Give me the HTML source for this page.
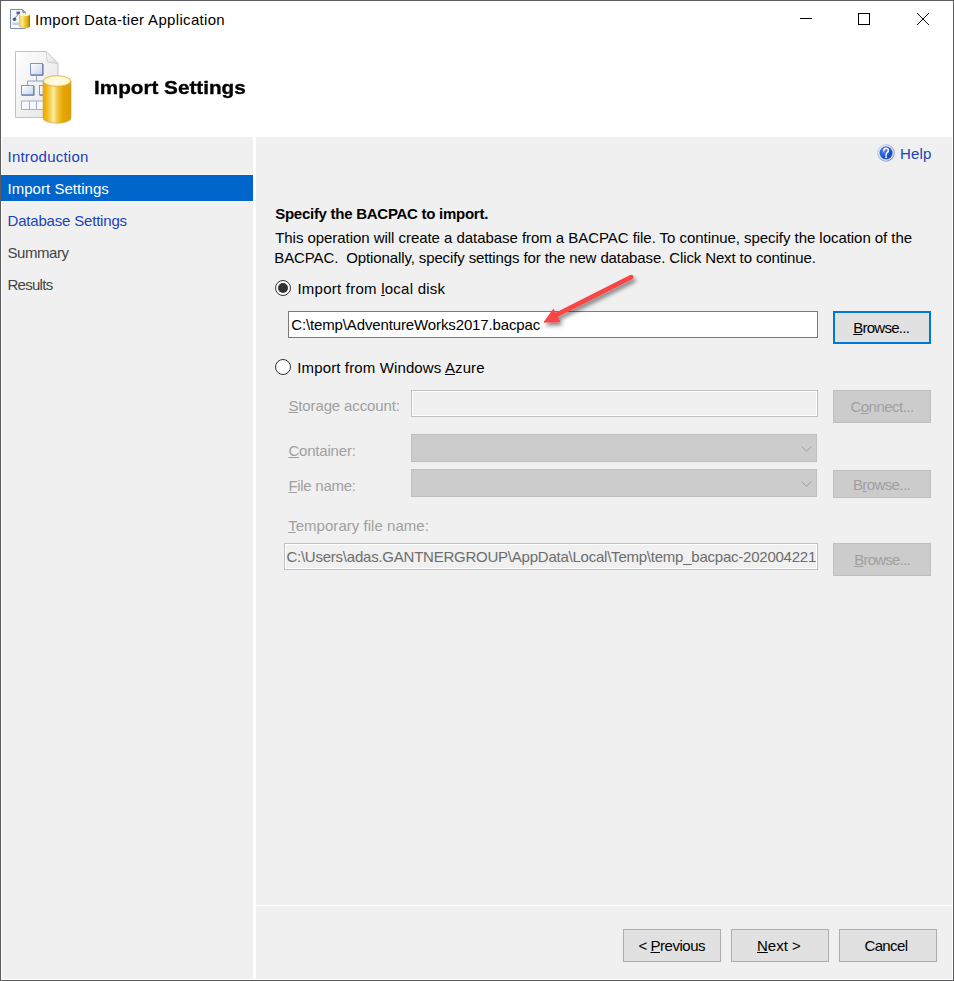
<!DOCTYPE html>
<html><head><meta charset="utf-8">
<style>
*{margin:0;padding:0;box-sizing:border-box}
html,body{width:954px;height:981px;overflow:hidden;background:#fff}
body{position:relative;font-family:"Liberation Sans",sans-serif;font-size:15px;color:#000}
.a{position:absolute}
.t{position:absolute;white-space:nowrap;line-height:15px;height:15px;font-size:15.0px}
.u{text-decoration:underline;text-underline-offset:1px}
.btn{position:absolute;background:#e1e1e1;border:1px solid #adadad}
.dis{position:absolute;background:#cccccc;border:1px solid #bfbfbf}
.gray{color:#a0a0a0}
</style></head><body>
<!-- window frame -->
<div class="a" style="left:0;top:0;width:954px;height:981px;border:1px solid #5d5d61"></div>

<!-- small title icon -->
<svg class="a" style="left:0;top:0" width="34" height="34" viewBox="0 0 34 34">
  <defs>
    <linearGradient id="scyl" x1="0" y1="0" x2="1" y2="0">
      <stop offset="0" stop-color="#f0c430"/>
      <stop offset="0.3" stop-color="#f8eaa0"/>
      <stop offset="0.5" stop-color="#f2cc40"/>
      <stop offset="0.8" stop-color="#e4a808"/>
      <stop offset="1" stop-color="#9a7010"/>
    </linearGradient>
  </defs>
  <path d="M10.5 9.5 H22.5 L25.5 12.5 V28.5 H10.5 Z" fill="#f6f8fc" stroke="#7a8cb2" stroke-width="1"/>
  <path d="M22 9.5 L22.5 13 L25.5 13 Z" fill="#7a8cb2"/>
  <rect x="16.5" y="11.5" width="3.5" height="3" fill="#56688e"/>
  <path d="M14.5 18 L18 15" stroke="#8090b8" stroke-width="1"/>
  <circle cx="14.5" cy="19.3" r="1.8" fill="#4c5c84"/>
  <rect x="12.5" y="22.5" width="7" height="2.5" fill="#c4cde0"/>
  <path d="M19 15 V27 Q24.5 29.4 30 27 V15 Z" fill="url(#scyl)"/>
  <ellipse cx="24.5" cy="14.8" rx="5.5" ry="1.4" fill="#faf2b8"/>
</svg>
<div class="t" style="left:35.00px;top:12.00px;letter-spacing:0.326px;color:#000">Import Data-tier Application</div>

<!-- window controls -->
<div class="a" style="left:800px;top:18px;width:12px;height:1px;background:#000"></div>
<div class="a" style="left:858px;top:13px;width:12px;height:12px;border:1px solid #000"></div>
<svg class="a" style="left:916px;top:12px" width="14" height="14" viewBox="0 0 14 14"><path d="M1 1 L13 13 M13 1 L1 13" stroke="#000" stroke-width="0.95"/></svg>

<!-- header icon -->
<svg class="a" style="left:0;top:40px" width="80" height="90" viewBox="0 40 80 90">
  <defs>
    <linearGradient id="pg" x1="0" y1="0" x2="1" y2="1">
      <stop offset="0" stop-color="#fefefe"/><stop offset="1" stop-color="#e4e4e4"/>
    </linearGradient>
    <linearGradient id="cyl" x1="0" y1="0" x2="1" y2="0">
      <stop offset="0" stop-color="#eba600"/>
      <stop offset="0.14" stop-color="#f2ba18"/>
      <stop offset="0.38" stop-color="#f8eca4"/>
      <stop offset="0.52" stop-color="#f0c63c"/>
      <stop offset="0.72" stop-color="#e6a600"/>
      <stop offset="1" stop-color="#dc9c00"/>
    </linearGradient>
    <radialGradient id="ctop" cx="0.5" cy="0.5" r="0.6">
      <stop offset="0" stop-color="#fffef4"/><stop offset="0.7" stop-color="#fdf6c8"/><stop offset="1" stop-color="#f2dc88"/>
    </radialGradient>
    <linearGradient id="box" x1="0" y1="0" x2="1" y2="1">
      <stop offset="0" stop-color="#ffffff"/><stop offset="1" stop-color="#c6d3ee"/>
    </linearGradient>
    <linearGradient id="fold" x1="0" y1="0" x2="1" y2="1">
      <stop offset="0" stop-color="#ffffff"/><stop offset="1" stop-color="#d8d8d8"/>
    </linearGradient>
  </defs>
  <path d="M15.5 51.5 H46 L58 63.5 V117.5 H15.5 Z" fill="url(#pg)" stroke="#c2c2c2" stroke-width="1"/>
  <path d="M46 51.5 L47.5 62 L58 63.5 Z" fill="url(#fold)" stroke="#c8c8c8" stroke-width="0.8" stroke-linejoin="round"/>
  <rect x="30.5" y="63.5" width="12" height="11.5" fill="url(#box)" stroke="#8497c0" stroke-width="1"/><path d="M31 75.2 H43 M43 64 V75.5" stroke="#6d80a8" stroke-width="1.2"/>
  <path d="M36.5 75 V81 M27.5 81 H45 M27.5 81 V85 M44.5 81 V85" stroke="#8ea2c8" stroke-width="1" fill="none"/>
  <rect x="21.5" y="85.5" width="12" height="9.5" fill="url(#box)" stroke="#8497c0" stroke-width="1"/><path d="M22 95.2 H34 M34 86 V95.5" stroke="#6d80a8" stroke-width="1.2"/>
  <rect x="39.5" y="85.5" width="12" height="9.5" fill="url(#box)" stroke="#8497c0" stroke-width="1"/><path d="M40 95.2 H50" stroke="#6d80a8" stroke-width="1.2"/>
  <path d="M21.5 101 H50 V109.5 H21.5 Z M29.5 101 V109.5 M36.5 101 V109.5 M43.5 101 V109.5" fill="#f6f8fc" stroke="#a2b0cc" stroke-width="1"/>
  <path d="M43 81 V118 A14 5.2 0 0 0 71 118 V81 Z" fill="url(#cyl)" stroke="#d8a850" stroke-width="0.7"/>
  <ellipse cx="57" cy="81" rx="13.8" ry="5.3" fill="url(#ctop)" stroke="#dcaa48" stroke-width="0.8"/>
</svg>
<div class="t" style="left:93.6px;top:79px;font-size:18.5px;line-height:18px;height:18px;font-weight:bold;transform:scaleX(1.118);transform-origin:0 0;-webkit-text-stroke:0.35px #000">Import Settings</div>

<!-- panels -->
<div class="a" style="left:1px;top:137px;width:952px;height:843px;background:#fff"></div>
<div class="a" style="left:2px;top:137px;width:251px;height:842px;background:#f0f0f0"></div>
<div class="a" style="left:256px;top:137px;width:696px;height:842px;background:#f0f0f0"></div>
<div class="a" style="left:256px;top:905px;width:696px;height:1px;background:#fff"></div>

<!-- nav -->
<div class="a" style="left:2px;top:174px;width:251px;height:28px;background:#fbf7f0"></div>
<div class="a" style="left:1px;top:175px;width:252px;height:26px;background:#0066cc"></div>
<div class="t" style="left:7.50px;top:149.00px;letter-spacing:0.221px;color:#1a42b8">Introduction</div>
<div class="t" style="left:7.50px;top:181.00px;letter-spacing:0.032px;color:#fff">Import Settings</div>
<div class="t" style="left:7.50px;top:213.00px;letter-spacing:-0.189px;color:#1a42b8">Database Settings</div>
<div class="t" style="left:7.40px;top:245.00px;letter-spacing:-0.422px;color:#444">Summary</div>
<div class="t" style="left:7.40px;top:277.00px;letter-spacing:-0.701px;color:#444">Results</div>

<!-- help -->
<svg class="a" style="left:876px;top:143px" width="20" height="20" viewBox="0 0 20 20">
  <defs><radialGradient id="hg" cx="0.35" cy="0.35" r="0.75"><stop offset="0" stop-color="#5a8cf0"/><stop offset="0.55" stop-color="#2458d8"/><stop offset="1" stop-color="#1440b0"/></radialGradient>
  <linearGradient id="hr" x1="0" y1="0" x2="1" y2="1"><stop offset="0" stop-color="#d4def2"/><stop offset="1" stop-color="#7a90c0"/></linearGradient></defs>
  <circle cx="10" cy="9.9" r="8.8" fill="url(#hr)"/>
  <circle cx="10" cy="9.9" r="7.3" fill="none" stroke="#eef3fb" stroke-width="0.9"/>
  <circle cx="10" cy="9.9" r="6.3" fill="url(#hg)"/>
  <path d="M7.7 7.6 Q7.9 5.3 10.2 5.3 Q12.5 5.4 12.4 7.4 Q12.3 8.8 10.9 9.8 Q10.1 10.5 10.1 12.2" fill="none" stroke="#fff" stroke-width="1.5" stroke-linecap="round"/>
  <circle cx="10.1" cy="14.2" r="1" fill="#fff"/>
</svg>
<div class="t" style="left:900.00px;top:146.00px;letter-spacing:0.183px;color:#1a42b8">Help</div>

<!-- content -->
<div class="t" style="left:275.21px;top:206.00px;letter-spacing:-0.266px;font-weight:bold">Specify the BACPAC to import.</div>
<div class="t" style="left:275.21px;top:230.00px;letter-spacing:-0.047px">This operation will create a database from a BACPAC file. To continue, specify the location of the</div>
<div class="t" style="left:274.30px;top:250.00px;letter-spacing:-0.120px">BACPAC.&nbsp; Optionally, specify settings for the new database. Click Next to continue.</div>

<!-- radio 1 -->
<div class="a" style="left:275px;top:280px;width:16px;height:16px;border-radius:50%;border:1px solid #333;background:#fff"></div>
<div class="a" style="left:278px;top:283px;width:10px;height:10px;border-radius:50%;background:#333"></div>
<div class="t" style="left:297.40px;top:281.00px;letter-spacing:0.246px">Import from <span class="u">l</span>ocal disk</div>

<div class="a" style="left:288px;top:311px;width:530px;height:27px;border:1px solid #7a7a7a;background:#fff"></div>
<div class="t" style="left:291.21px;top:317.00px;letter-spacing:-0.128px">C:\temp\AdventureWorks2017.bacpac</div>

<div class="a" style="left:833px;top:311px;width:98px;height:33px;border:2px solid #0078d7;background:#e1e1e1"></div>
<div class="t" style="left:853.21px;top:320.00px;letter-spacing:-0.735px"><span class="u">B</span>rowse...</div>

<!-- radio 2 -->
<div class="a" style="left:275px;top:359px;width:16px;height:16px;border-radius:50%;border:1px solid #333;background:#fff"></div>
<div class="t" style="left:297.30px;top:360.00px;letter-spacing:0.127px">Import from Windows <span class="u">A</span>zure</div>

<div class="t gray" style="left:288.38px;top:398.00px;letter-spacing:-0.121px"><span class="u">S</span>torage account:</div>
<div class="a" style="left:411px;top:390px;width:407px;height:27px;border:1px solid #c0c0c0;background:#f0f0f0;box-shadow:inset 0 0 0 1px #fff"></div>
<div class="dis" style="left:833px;top:390px;width:98px;height:33px"></div>
<div class="t gray" style="left:850.44px;top:399.00px;letter-spacing:-0.519px">C<span class="u">o</span>nnect...</div>

<div class="t gray" style="left:288.38px;top:443.00px;letter-spacing:-0.190px"><span class="u">C</span>ontainer:</div>
<div class="dis" style="left:411px;top:434px;width:406px;height:28px"></div>
<svg class="a" style="left:801px;top:445.5px" width="11" height="7" viewBox="0 0 11 7"><path d="M0.8 0.6 L5.5 5.3 L10.2 0.6" fill="none" stroke="#9c9c9c" stroke-width="1"/></svg>

<div class="t gray" style="left:288.38px;top:478.00px;letter-spacing:-0.281px"><span class="u">F</span>ile name:</div>
<div class="dis" style="left:411px;top:469px;width:406px;height:28px"></div>
<svg class="a" style="left:801px;top:480.5px" width="11" height="7" viewBox="0 0 11 7"><path d="M0.8 0.6 L5.5 5.3 L10.2 0.6" fill="none" stroke="#9c9c9c" stroke-width="1"/></svg>
<div class="dis" style="left:833px;top:470px;width:98px;height:28px"></div>
<div class="t gray" style="left:852.90px;top:477.00px;letter-spacing:-0.600px">B<span class="u">r</span>owse...</div>

<div class="t gray" style="left:288.16px;top:518.00px;letter-spacing:0.034px"><span class="u">T</span>emporary file name:</div>
<div class="a" style="left:284px;top:543px;width:534px;height:27px;border:1px solid #c0c0c0;background:#f0f0f0;box-shadow:inset 0 0 0 1px #fff;overflow:hidden">
  <div class="t" style="left:1.40px;top:5.00px;letter-spacing:-0.233px;color:#6d6d6d">C:\Users\adas.GANTNERGROUP\AppData\Local\Temp\temp_bacpac-202004221</div>
</div>
<div class="dis" style="left:833px;top:543px;width:98px;height:33px"></div>
<div class="t gray" style="left:854.17px;top:552.00px;letter-spacing:-0.756px"><span class="u">B</span>rowse...</div>

<!-- bottom buttons -->
<div class="btn" style="left:623px;top:929px;width:98px;height:33px"></div>
<div class="t" style="left:638.44px;top:938.00px;letter-spacing:-0.467px">&lt; <span class="u">P</span>revious</div>
<div class="btn" style="left:731px;top:929px;width:98px;height:33px"></div>
<div class="t" style="left:757.04px;top:938.00px;letter-spacing:-0.030px"><span class="u">N</span>ext &gt;</div>
<div class="btn" style="left:839px;top:929px;width:98px;height:33px"></div>
<div class="t" style="left:864.40px;top:938.00px;letter-spacing:-0.598px">Cancel</div>

<!-- red arrow -->
<svg class="a" style="left:520px;top:255px" width="140" height="95" viewBox="520 255 140 95">
  <defs><filter id="sh" x="-30%" y="-30%" width="160%" height="160%"><feGaussianBlur in="SourceAlpha" stdDeviation="2"/><feOffset dx="1.5" dy="3"/><feComponentTransfer><feFuncA type="linear" slope="0.5"/></feComponentTransfer><feMerge><feMergeNode/><feMergeNode in="SourceGraphic"/></feMerge></filter></defs>
  <g filter="url(#sh)">
    <path d="M631.2 277.2 L555 315.6" stroke="#f84444" stroke-width="4.7" stroke-linecap="round"/>
    <path d="M544 322.2 L553.3 309.2 L560 321.8 Z" fill="#f84444" stroke="#f84444" stroke-width="0.8" stroke-linejoin="round"/>
  </g>
</svg>
</body></html>
